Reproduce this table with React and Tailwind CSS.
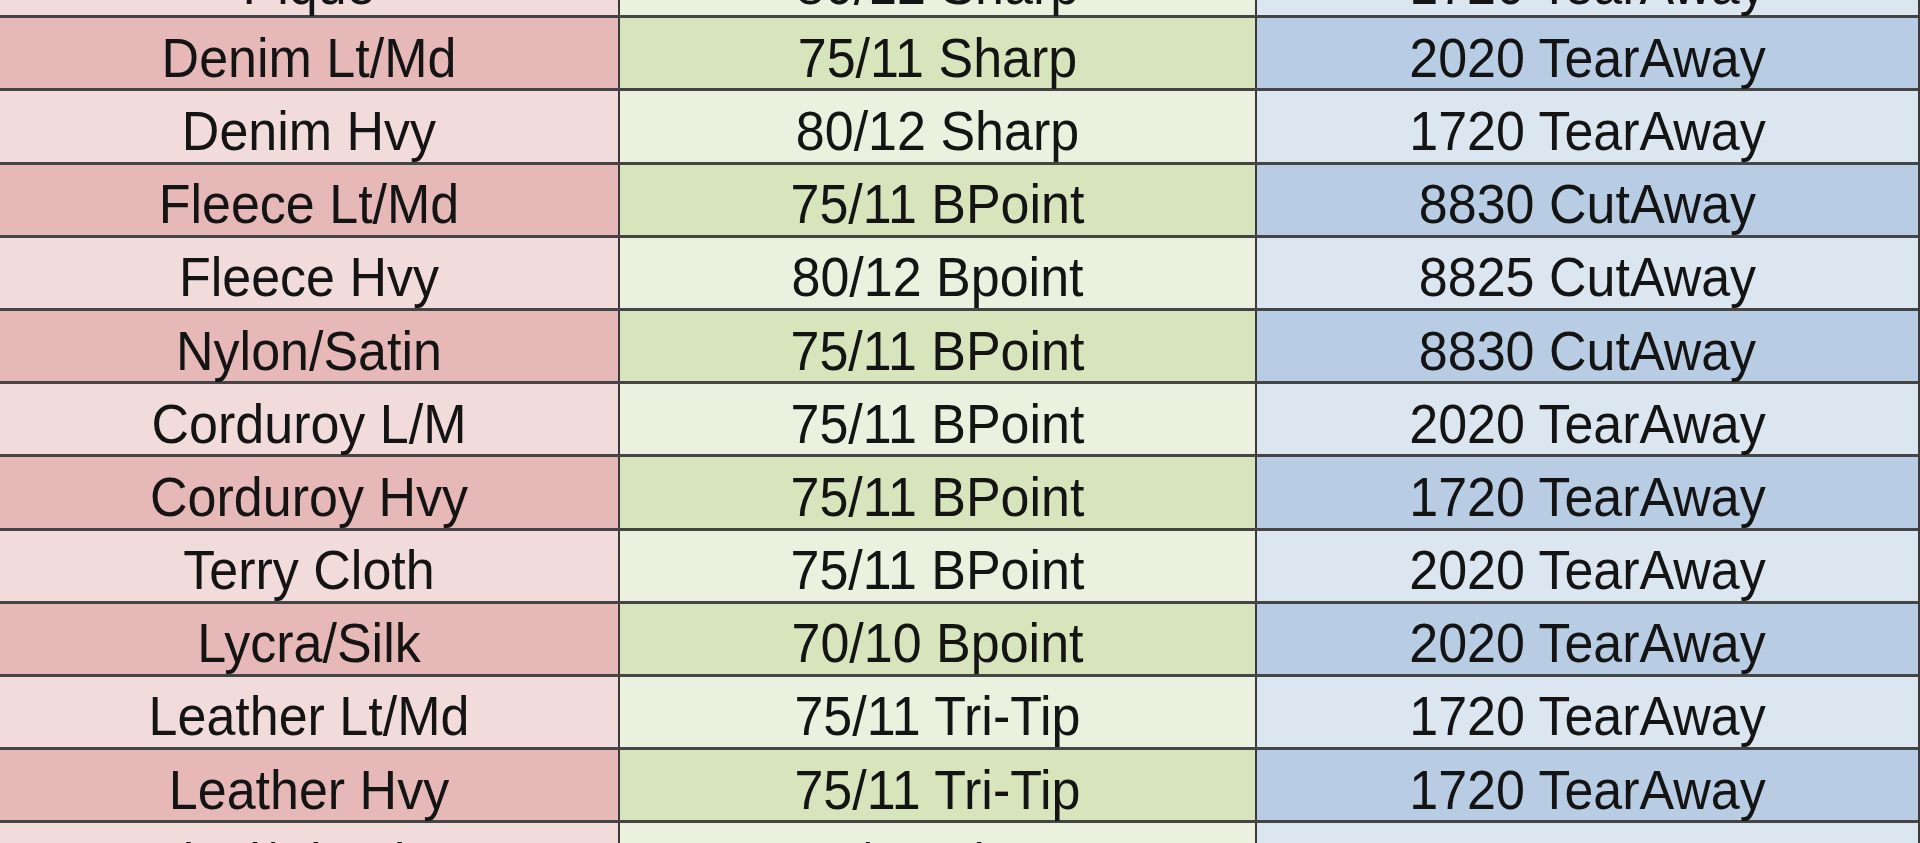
import React from 'react';

const rows = [
  ['Pique', '80/12 Sharp', '1720 TearAway'],
  ['Denim Lt/Md', '75/11 Sharp', '2020 TearAway'],
  ['Denim Hvy', '80/12 Sharp', '1720 TearAway'],
  ['Fleece Lt/Md', '75/11 BPoint', '8830 CutAway'],
  ['Fleece Hvy', '80/12 Bpoint', '8825 CutAway'],
  ['Nylon/Satin', '75/11 BPoint', '8830 CutAway'],
  ['Corduroy L/M', '75/11 BPoint', '2020 TearAway'],
  ['Corduroy Hvy', '75/11 BPoint', '1720 TearAway'],
  ['Terry Cloth', '75/11 BPoint', '2020 TearAway'],
  ['Lycra/Silk', '70/10 Bpoint', '2020 TearAway'],
  ['Leather Lt/Md', '75/11 Tri-Tip', '1720 TearAway'],
  ['Leather Hvy', '75/11 Tri-Tip', '1720 TearAway'],
  ['Vinyl/Pleather', '75/11 Sharp', '1720 TearAway'],
];

const App = () => {
  return (
    <div
      className="w-[1920px] h-[843px] overflow-hidden bg-white text-[#141414]"
      style={{ fontFamily: '"Liberation Sans", Arial, sans-serif' }}
    >
      <div className="mt-[-55px] border-r-2 border-[#3c3c3c]">
        {rows.map((row, i) => {
          const dark = i % 2 === 1;
          return (
            <div
              key={i}
              className="grid grid-cols-[618px_637px_1fr] h-[73.2px] border-b-[3px] border-[#454545] text-[52px] leading-none"
            >
              {/* Fabric */}
              <div
                className={`flex items-center justify-center pt-[9px] ${
                  dark ? 'bg-[#e6b8b7]' : 'bg-[#f2dcdb]'
                }`}
              >
                <span className="inline-block scale-y-105">{row[0]}</span>
              </div>
              {/* Needle */}
              <div
                className={`flex items-center justify-center pt-[9px] border-l-2 border-[#3a3a3a] ${
                  dark ? 'bg-[#d8e4bc]' : 'bg-[#ebf1de]'
                }`}
              >
                <span className="inline-block scale-y-105">{row[1]}</span>
              </div>
              {/* Stabilizer */}
              <div
                className={`flex items-center justify-center pt-[9px] border-l-2 border-[#3a3a3a] ${
                  dark ? 'bg-[#b8cce4]' : 'bg-[#dce6f1]'
                }`}
              >
                <span className="inline-block scale-y-105">{row[2]}</span>
              </div>
            </div>
          );
        })}
      </div>
    </div>
  );
};

export default App;
